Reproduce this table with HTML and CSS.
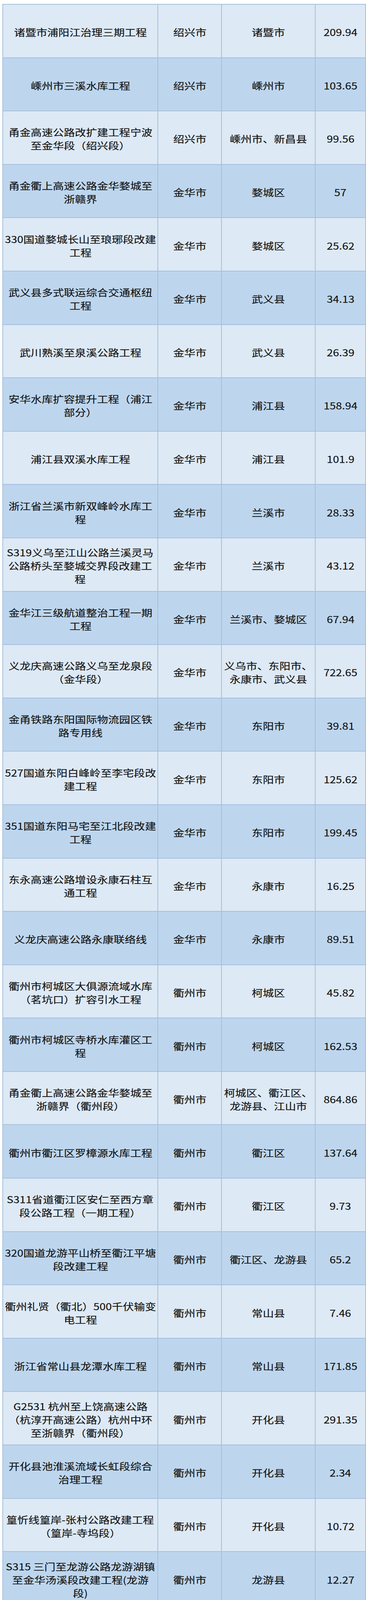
FILE: index.html
```html
<!DOCTYPE html>
<html lang="zh-CN">
<head>
<meta charset="utf-8">
<title>重大项目表</title>
<link rel="stylesheet" href="styles.css">
</head>
<body>
<div class="sheet">
<div class="row"><div class="cell"><span class="t">诸暨市浦阳江治理三期工程</span></div><div class="cell"><span class="t">绍兴市</span></div><div class="cell"><span class="t">诸暨市</span></div><div class="cell"><span class="t">209.94</span></div></div>
<div class="row"><div class="cell"><span class="t">嵊州市三溪水库工程</span></div><div class="cell"><span class="t">绍兴市</span></div><div class="cell"><span class="t">嵊州市</span></div><div class="cell"><span class="t">103.65</span></div></div>
<div class="row"><div class="cell"><span class="t">甬金高速公路改扩建工程宁波<br>至金华段（绍兴段）</span></div><div class="cell"><span class="t">绍兴市</span></div><div class="cell"><span class="t">嵊州市、新昌县</span></div><div class="cell"><span class="t">99.56</span></div></div>
<div class="row"><div class="cell"><span class="t">甬金衢上高速公路金华婺城至<br>浙赣界</span></div><div class="cell"><span class="t">金华市</span></div><div class="cell"><span class="t">婺城区</span></div><div class="cell"><span class="t">57</span></div></div>
<div class="row"><div class="cell"><span class="t">330国道婺城长山至琅琊段改建<br>工程</span></div><div class="cell"><span class="t">金华市</span></div><div class="cell"><span class="t">婺城区</span></div><div class="cell"><span class="t">25.62</span></div></div>
<div class="row"><div class="cell"><span class="t">武义县多式联运综合交通枢纽<br>工程</span></div><div class="cell"><span class="t">金华市</span></div><div class="cell"><span class="t">武义县</span></div><div class="cell"><span class="t">34.13</span></div></div>
<div class="row"><div class="cell"><span class="t">武川熟溪至泉溪公路工程</span></div><div class="cell"><span class="t">金华市</span></div><div class="cell"><span class="t">武义县</span></div><div class="cell"><span class="t">26.39</span></div></div>
<div class="row"><div class="cell"><span class="t">安华水库扩容提升工程（浦江<br>部分）</span></div><div class="cell"><span class="t">金华市</span></div><div class="cell"><span class="t">浦江县</span></div><div class="cell"><span class="t">158.94</span></div></div>
<div class="row"><div class="cell"><span class="t">浦江县双溪水库工程</span></div><div class="cell"><span class="t">金华市</span></div><div class="cell"><span class="t">浦江县</span></div><div class="cell"><span class="t">101.9</span></div></div>
<div class="row"><div class="cell"><span class="t">浙江省兰溪市新双峰岭水库工<br>程</span></div><div class="cell"><span class="t">金华市</span></div><div class="cell"><span class="t">兰溪市</span></div><div class="cell"><span class="t">28.33</span></div></div>
<div class="row"><div class="cell"><span class="t">S319义乌至江山公路兰溪灵马<br>公路桥头至婺城交界段改建工<br>程</span></div><div class="cell"><span class="t">金华市</span></div><div class="cell"><span class="t">兰溪市</span></div><div class="cell"><span class="t">43.12</span></div></div>
<div class="row"><div class="cell"><span class="t">金华江三级航道整治工程一期<br>工程</span></div><div class="cell"><span class="t">金华市</span></div><div class="cell"><span class="t">兰溪市、婺城区</span></div><div class="cell"><span class="t">67.94</span></div></div>
<div class="row"><div class="cell"><span class="t">义龙庆高速公路义乌至龙泉段<br>（金华段）</span></div><div class="cell"><span class="t">金华市</span></div><div class="cell"><span class="t">义乌市、东阳市、<br>永康市、武义县</span></div><div class="cell"><span class="t">722.65</span></div></div>
<div class="row"><div class="cell"><span class="t">金甬铁路东阳国际物流园区铁<br>路专用线</span></div><div class="cell"><span class="t">金华市</span></div><div class="cell"><span class="t">东阳市</span></div><div class="cell"><span class="t">39.81</span></div></div>
<div class="row"><div class="cell"><span class="t">527国道东阳白峰岭至李宅段改<br>建工程</span></div><div class="cell"><span class="t">金华市</span></div><div class="cell"><span class="t">东阳市</span></div><div class="cell"><span class="t">125.62</span></div></div>
<div class="row"><div class="cell"><span class="t">351国道东阳马宅至江北段改建<br>工程</span></div><div class="cell"><span class="t">金华市</span></div><div class="cell"><span class="t">东阳市</span></div><div class="cell"><span class="t">199.45</span></div></div>
<div class="row"><div class="cell"><span class="t">东永高速公路增设永康石柱互<br>通工程</span></div><div class="cell"><span class="t">金华市</span></div><div class="cell"><span class="t">永康市</span></div><div class="cell"><span class="t">16.25</span></div></div>
<div class="row"><div class="cell"><span class="t">义龙庆高速公路永康联络线</span></div><div class="cell"><span class="t">金华市</span></div><div class="cell"><span class="t">永康市</span></div><div class="cell"><span class="t">89.51</span></div></div>
<div class="row"><div class="cell"><span class="t">衢州市柯城区大俱源流域水库<br>（茗坑口）扩容引水工程</span></div><div class="cell"><span class="t">衢州市</span></div><div class="cell"><span class="t">柯城区</span></div><div class="cell"><span class="t">45.82</span></div></div>
<div class="row"><div class="cell"><span class="t">衢州市柯城区寺桥水库灌区工<br>程</span></div><div class="cell"><span class="t">衢州市</span></div><div class="cell"><span class="t">柯城区</span></div><div class="cell"><span class="t">162.53</span></div></div>
<div class="row"><div class="cell"><span class="t">甬金衢上高速公路金华婺城至<br>浙赣界（衢州段）</span></div><div class="cell"><span class="t">衢州市</span></div><div class="cell"><span class="t">柯城区、衢江区、<br>龙游县、江山市</span></div><div class="cell"><span class="t">864.86</span></div></div>
<div class="row"><div class="cell"><span class="t">衢州市衢江区罗樟源水库工程</span></div><div class="cell"><span class="t">衢州市</span></div><div class="cell"><span class="t">衢江区</span></div><div class="cell"><span class="t">137.64</span></div></div>
<div class="row"><div class="cell"><span class="t">S311省道衢江区安仁至西方章<br>段公路工程（一期工程）</span></div><div class="cell"><span class="t">衢州市</span></div><div class="cell"><span class="t">衢江区</span></div><div class="cell"><span class="t">9.73</span></div></div>
<div class="row"><div class="cell"><span class="t">320国道龙游平山桥至衢江平塘<br>段改建工程</span></div><div class="cell"><span class="t">衢州市</span></div><div class="cell"><span class="t">衢江区、龙游县</span></div><div class="cell"><span class="t">65.2</span></div></div>
<div class="row"><div class="cell"><span class="t">衢州礼贤（衢北）500千伏输变<br>电工程</span></div><div class="cell"><span class="t">衢州市</span></div><div class="cell"><span class="t">常山县</span></div><div class="cell"><span class="t">7.46</span></div></div>
<div class="row"><div class="cell"><span class="t">浙江省常山县龙潭水库工程</span></div><div class="cell"><span class="t">衢州市</span></div><div class="cell"><span class="t">常山县</span></div><div class="cell"><span class="t">171.85</span></div></div>
<div class="row"><div class="cell"><span class="t">G2531&nbsp;杭州至上饶高速公路<br>（杭淳开高速公路）杭州中环<br>至浙赣界（衢州段）</span></div><div class="cell"><span class="t">衢州市</span></div><div class="cell"><span class="t">开化县</span></div><div class="cell"><span class="t">291.35</span></div></div>
<div class="row"><div class="cell"><span class="t">开化县池淮溪流域长虹段综合<br>治理工程</span></div><div class="cell"><span class="t">衢州市</span></div><div class="cell"><span class="t">开化县</span></div><div class="cell"><span class="t">2.34</span></div></div>
<div class="row"><div class="cell"><span class="t">篁忻线篁岸-张村公路改建工程<br>（篁岸-寺坞段）</span></div><div class="cell"><span class="t">衢州市</span></div><div class="cell"><span class="t">开化县</span></div><div class="cell"><span class="t">10.72</span></div></div>
<div class="row"><div class="cell"><span class="t">S315&nbsp;三门至龙游公路龙游湖镇<br>至金华汤溪段改建工程(龙游<br>段)</span></div><div class="cell"><span class="t">衢州市</span></div><div class="cell"><span class="t">龙游县</span></div><div class="cell"><span class="t">12.27</span></div></div>
<div class="row"><div class="cell"><span class="t">龙游县佛乡水库工程</span></div><div class="cell"><span class="t">衢州市</span></div><div class="cell"><span class="t">龙游县</span></div><div class="cell"><span class="t">404.34</span></div></div>
<div class="row"><div class="cell"><span class="t">江山市张村水库工程</span></div><div class="cell"><span class="t">衢州市</span></div><div class="cell"><span class="t">江山市</span></div><div class="cell"><span class="t">124.66</span></div></div>
<div class="row"><div class="cell"><span class="t">205国道江山峡口大桥至保安路<br>口段改建工程</span></div><div class="cell"><span class="t">衢州市</span></div><div class="cell"><span class="t">江山市</span></div><div class="cell"><span class="t">58.93</span></div></div>
<div class="row"><div class="cell"><span class="t">G92杭州湾地区环线高速公路宁<br>波戚家山至舟山金塘段</span></div><div class="cell"><span class="t">舟山市</span></div><div class="cell"><span class="t">定海区</span></div><div class="cell"><span class="t">59.06</span></div></div>
<div class="row"><div class="cell"><span class="t">舟山市定海区海塘安澜工程<br>（金塘片北部海堤）</span></div><div class="cell"><span class="t">舟山市</span></div><div class="cell"><span class="t">定海区</span></div><div class="cell"><span class="t">71.04</span></div></div>
<div class="row"><div class="cell"><span class="t">台州市七条河拓浚工程（椒江<br>段）</span></div><div class="cell"><span class="t">台州市</span></div><div class="cell"><span class="t">椒江区</span></div><div class="cell"><span class="t">21.12</span></div></div>
<div class="row"><div class="cell"><span class="t">台州市洪家场浦强排工程（台<br>州湾新区段）</span></div><div class="cell"><span class="t">台州市</span></div><div class="cell"><span class="t">椒江区</span></div><div class="cell"><span class="t">62.27</span></div></div>
<div class="row"><div class="cell"><span class="t">台州市路桥区青龙浦排涝工程</span></div><div class="cell"><span class="t">台州市</span></div><div class="cell"><span class="t">路桥区</span></div><div class="cell"><span class="t">44.67</span></div></div>
<div class="row"><div class="cell"><span class="t">路桥至永嘉公路路桥白沙至上<br>盟段工程</span></div><div class="cell"><span class="t">台州市</span></div><div class="cell"><span class="t">路桥区</span></div><div class="cell"><span class="t">55.93</span></div></div>
<div class="row"><div class="cell"><span class="t">上三高速天台东互通与高铁站<br>连接线八都至梅坦段工程</span></div><div class="cell"><span class="t">台州市</span></div><div class="cell"><span class="t">天台县</span></div><div class="cell"><span class="t">18.13</span></div></div>
</div>
</body>
</html>
```

FILE: styles.css
```css
html, body {
  margin: 0;
  padding: 0;
  background: #ffffff;
}

body {
  padding: 10px 0 0 6px;
}

.sheet {
  display: grid;
  grid-template-columns: 397px 163px 240px 129px;
  grid-auto-rows: 136.6px;
  width: 931px;
  box-sizing: border-box;
  border-left: 2px solid #a4c0dc;
  border-top: 2px solid #a4c0dc;
}

.row {
  display: contents;
}

.cell {
  box-sizing: border-box;
  display: flex;
  align-items: center;
  justify-content: center;
  padding-top: 6px;
  border-right: 2px solid #a4c0dc;
  border-bottom: 2px solid #a4c0dc;
  background: #dde9f5;
  text-align: center;
  font-family: "Noto Sans CJK SC", "Noto Sans", sans-serif;
  font-size: 24px;
  line-height: 34px;
  color: #151515;
  -webkit-text-stroke: 0.25px #151515;
}

.row:nth-child(even) .cell {
  background: #bdd6ee;
}

.t {
  display: inline-block;
  white-space: nowrap;
  transform: scaleX(1.18);
}
```
